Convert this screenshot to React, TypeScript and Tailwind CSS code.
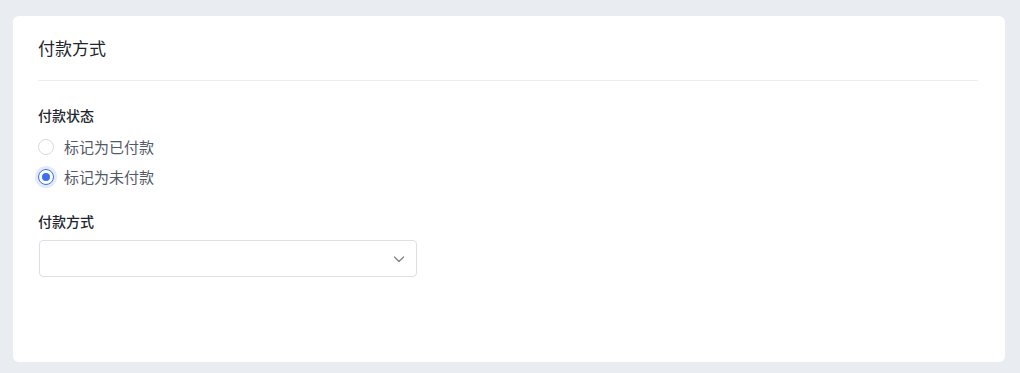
import React from "react";

export default function App() {
  const font = { fontFamily: '"Noto Sans CJK SC", "Noto Sans", sans-serif' };
  return (
    <div
      className="w-[1020px] h-[373px] bg-[#e9ecf1] pt-[16px] pl-[13px] pr-[15px] pb-[11px]"
      style={font}
    >
      <div className="h-[346px] bg-white rounded-[6px] px-[25px]">
        <div className="pt-[20px] pb-[20px] border-b border-[#eceef1] mr-[2px]">
          <div className="text-[17px] leading-[24px] text-[#22262c]">付款方式</div>
        </div>
        <div className="mt-[24px] text-[14px] leading-[20px] font-medium text-[#22262c]">
          付款状态
        </div>
        <div className="mt-[12px] flex flex-col gap-[10px]">
          <label className="flex items-center h-[20px] gap-[10px]">
            <span className="w-[16px] h-[16px] rounded-full border border-[#d7dae0] bg-white" />
            <span className="text-[15px] leading-[20px] text-[#535a66]">标记为已付款</span>
          </label>
          <label className="flex items-center h-[20px] gap-[10px]">
            <span className="w-[16px] h-[16px] rounded-full border-[1.5px] border-[#3c6ef0] bg-white flex items-center justify-center shadow-[0_0_0_3px_#e3eafd]">
              <span className="w-[8px] h-[8px] rounded-full bg-[#3c6ef0]" />
            </span>
            <span className="text-[15px] leading-[20px] text-[#535a66]">标记为未付款</span>
          </label>
        </div>
        <div className="mt-[24px] text-[14px] leading-[20px] font-medium text-[#22262c]">
          付款方式
        </div>
        <div className="mt-[9px] ml-[1px] w-[378px] h-[37px] border border-[#dcdfe6] rounded-[4px] flex items-center justify-end pr-[11px]">
          <svg width="12" height="12" viewBox="0 0 12 12" fill="none">
            <path d="M1.5 4L6 8.5L10.5 4" stroke="#7a808c" strokeWidth="1.2" strokeLinecap="round" strokeLinejoin="round" />
          </svg>
        </div>
      </div>
    </div>
  );
}
